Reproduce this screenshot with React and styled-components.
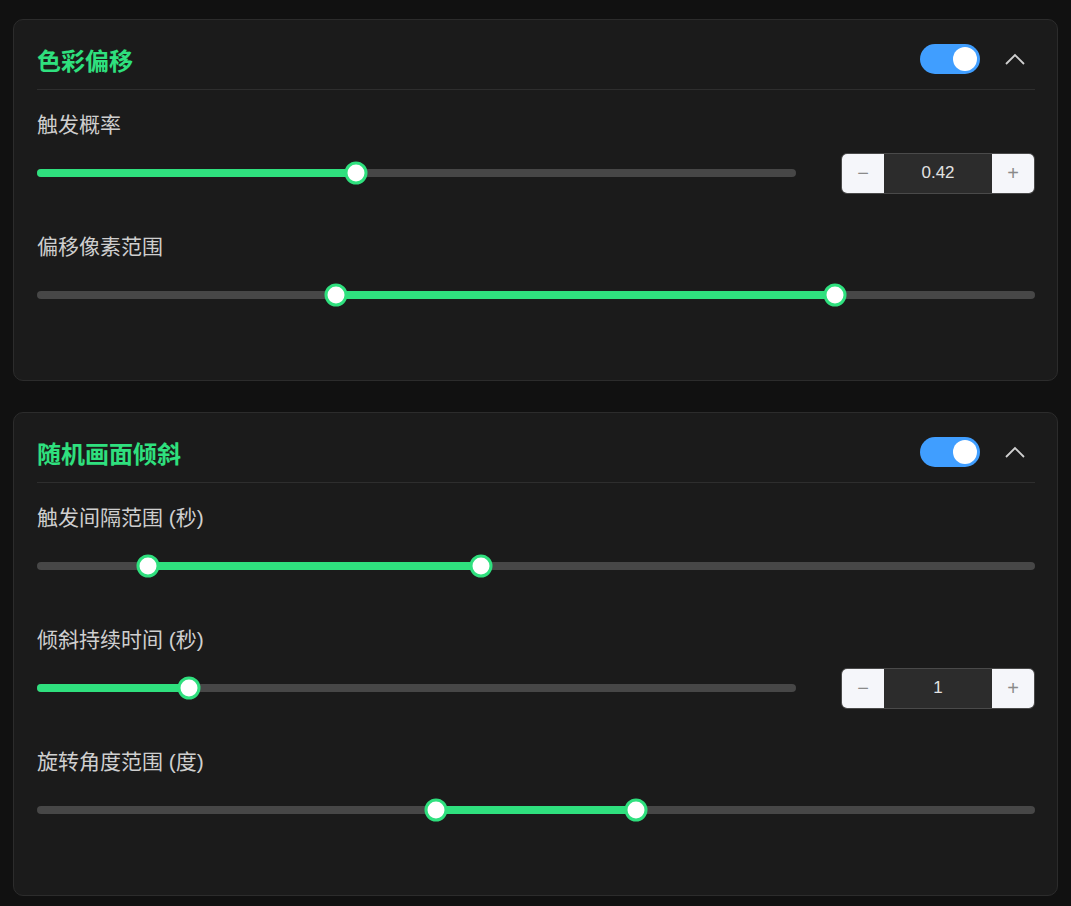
import styled, { createGlobalStyle } from 'styled-components'

//! Constants
const GREEN = '#2fe07e'
const FONT = '"Liberation Sans", "Noto Sans CJK SC", sans-serif'

const SECTIONS = [
    {
        title: '色彩偏移',
        items: [
            { label: '触发概率', min: 0, max: 1, value: [0.42], input: '0.42' },
            { label: '偏移像素范围', min: 0, max: 10, value: [3, 8] }
        ]
    },
    {
        title: '随机画面倾斜',
        items: [
            { label: '触发间隔范围 (秒)', min: 0, max: 9, value: [1, 4] },
            { label: '倾斜持续时间 (秒)', min: 0, max: 5, value: [1], input: '1' },
            { label: '旋转角度范围 (度)', min: -10, max: 10, value: [-2, 2] }
        ]
    }
]

//! Styles
const GlobalStyle = createGlobalStyle`
    html, body {
        margin: 0;
        background: #111111;
        font-family: ${FONT};
    }
`
const Page = styled.main`
    display: flex;
    flex-direction: column;
    gap: 31px;
    padding: 19px 13px 10px;
`
const Card = styled.section`
    background: #1b1b1b;
    border: 1px solid #2c2c2c;
    border-radius: 10px;
    padding: 24px 22px 25px 23px;
`
const Header = styled.header`
    display: flex;
    align-items: center;
    height: 30px;
    padding-bottom: 15px;
    border-bottom: 1px solid #2e2e2e;
    margin-bottom: 21px;
`
const Title = styled.h2`
    flex: 1;
    margin: 0;
    font-size: 24px;
    font-weight: 700;
    color: ${GREEN};
`
const Toggle = styled.div`
    position: relative;
    width: 60px;
    height: 30px;
    border-radius: 15px;
    background: #409eff;
`
const Knob = styled.span`
    position: absolute;
    top: 3px;
    right: 3px;
    width: 24px;
    height: 24px;
    border-radius: 50%;
    background: #ffffff;
`
const Chevron = styled.button`
    display: flex;
    align-items: center;
    justify-content: center;
    width: 40px;
    height: 30px;
    margin-left: 15px;
    padding: 0;
    border: none;
    background: none;
`
const Item = styled.div`
    margin-bottom: 39px;
`
const Label = styled.div`
    font-size: 21px;
    line-height: 28px;
    color: #cfcfcf;
    margin-bottom: 13px;
`
const Row = styled.div`
    display: flex;
    align-items: center;
    gap: 45px;
    height: 42px;
`
const Track = styled.div`
    position: relative;
    flex: 1;
    height: 8px;
    border-radius: 4px;
    background: #474747;
`
const Fill = styled.div`
    position: absolute;
    top: 0;
    height: 100%;
    border-radius: 4px;
    background: ${GREEN};
`
const Thumb = styled.span`
    position: absolute;
    top: 50%;
    width: 17px;
    height: 17px;
    border: 3px solid ${GREEN};
    border-radius: 50%;
    background: #ffffff;
    transform: translate(-50%, -50%);
`
const Stepper = styled.div`
    display: flex;
    width: 192px;
    height: 39px;
    border: 1px solid #4a4a4a;
    border-radius: 6px;
    overflow: hidden;
`
const StepButton = styled.button`
    width: 42px;
    padding: 0;
    border: none;
    background: #f5f6fa;
    color: #8a8a8a;
    font-family: ${FONT};
    font-size: 20px;
    font-weight: 300;
`
const StepValue = styled.div`
    flex: 1;
    display: flex;
    align-items: center;
    justify-content: center;
    background: #2c2c2c;
    color: #e2e2e2;
    font-size: 17px;
`

//! Components
const Slider = ({ min, max, value }) => {
    const pct = (v) => ((v - min) / (max - min)) * 100
    const start = value.length > 1 ? pct(value[0]) : 0
    const end = pct(value[value.length - 1])
    return (
        <Track>
            <Fill style={{ left: `${start}%`, width: `${end - start}%` }} />
            {value.map((v, i) => (
                <Thumb key={i} style={{ left: `${pct(v)}%` }} />
            ))}
        </Track>
    )
}

const Section = ({ title, items }) => (
    <Card>
        <Header>
            <Title>{title}</Title>
            <Toggle>
                <Knob />
            </Toggle>
            <Chevron>
                <svg width="22" height="14" viewBox="0 0 22 14" fill="none">
                    <path d="M2 12 L11 3 L20 12" stroke="#d0d0d0" strokeWidth="1.8" />
                </svg>
            </Chevron>
        </Header>
        {items.map((item) => (
            <Item key={item.label}>
                <Label>{item.label}</Label>
                <Row>
                    <Slider min={item.min} max={item.max} value={item.value} />
                    {item.input && (
                        <Stepper>
                            <StepButton>−</StepButton>
                            <StepValue>{item.input}</StepValue>
                            <StepButton>+</StepButton>
                        </Stepper>
                    )}
                </Row>
            </Item>
        ))}
    </Card>
)

const App = () => (
    <>
        <GlobalStyle />
        <Page>
            {SECTIONS.map((s) => (
                <Section key={s.title} {...s} />
            ))}
        </Page>
    </>
)

export default App
